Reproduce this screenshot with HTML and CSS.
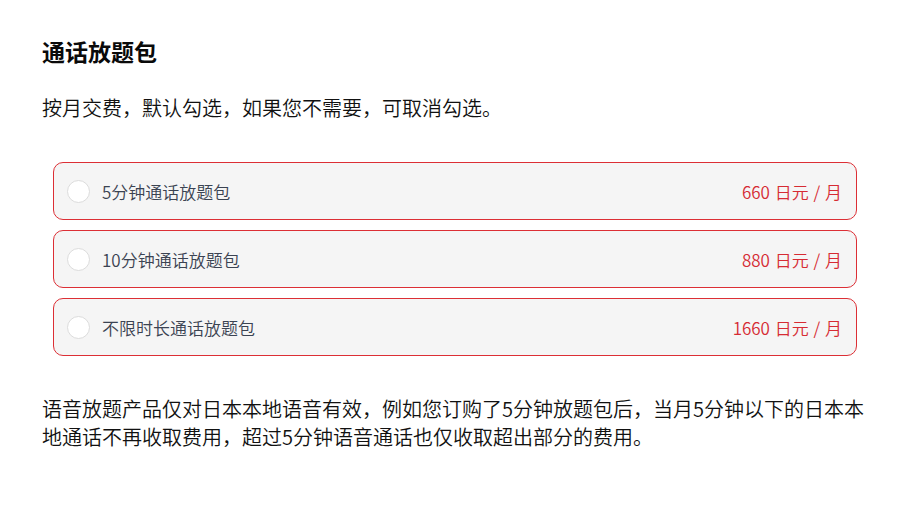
FILE: index.html
```html
<!DOCTYPE html>
<html lang="zh-CN">
<head>
<meta charset="utf-8">
<link rel="stylesheet" href="styles.css">
</head>
<body>
<main class="page">
  <h1 class="title">通话放题包</h1>
  <p class="intro">按月交费，默认勾选，如果您不需要，可取消勾选。</p>
  <div class="plans">
    <label class="plan">
      <span class="radio"></span>
      <span class="name">5分钟通话放题包</span>
      <span class="price">660 日元 / 月</span>
    </label>
    <label class="plan">
      <span class="radio"></span>
      <span class="name">10分钟通话放题包</span>
      <span class="price">880 日元 / 月</span>
    </label>
    <label class="plan">
      <span class="radio"></span>
      <span class="name">不限时长通话放题包</span>
      <span class="price">1660 日元 / 月</span>
    </label>
  </div>
  <p class="note">语音放题产品仅对日本本地语音有效，例如您订购了5分钟放题包后，当月5分钟以下的日本本地通话不再收取费用，超过5分钟语音通话也仅收取超出部分的费用。</p>
</main>
</body>
</html>
```

FILE: styles.css
```css
* { box-sizing: border-box; }
html, body { margin: 0; padding: 0; background: #fff; }
body {
  font-family: "Noto Sans CJK SC", "Noto Sans", sans-serif;
  color: #111;
}
.page {
  padding: 34px 36px 0 42px;
}
.title {
  margin: 0;
  font-size: 23px;
  line-height: 34px;
  font-weight: 700;
  color: #0a0a0a;
}
.intro {
  margin: 26px 0 0;
  font-size: 20px;
  line-height: 28px;
  font-weight: 350;
  color: #111;
}
.plans {
  margin: 40px 7px 0 11px;
  display: flex;
  flex-direction: column;
  gap: 10px;
}
.plan {
  display: flex;
  align-items: center;
  height: 58px;
  padding: 0 14px 0 13px;
  border: 1px solid #dc2f35;
  border-radius: 10px;
  background: #f5f5f5;
}
.radio {
  width: 23px;
  height: 23px;
  border-radius: 50%;
  border: 1px solid #dcdcdc;
  background: #fff;
  flex: none;
}
.name {
  margin-left: 12px;
  font-size: 17px;
  font-weight: 350;
  color: #3b4352;
  flex: 1;
}
.price {
  font-size: 17px;
  font-weight: 350;
  word-spacing: 1px;
  color: #d62b33;
}
.note {
  margin: 39px 0 0;
  font-size: 20px;
  line-height: 28px;
  font-weight: 350;
  color: #111;
}
```
